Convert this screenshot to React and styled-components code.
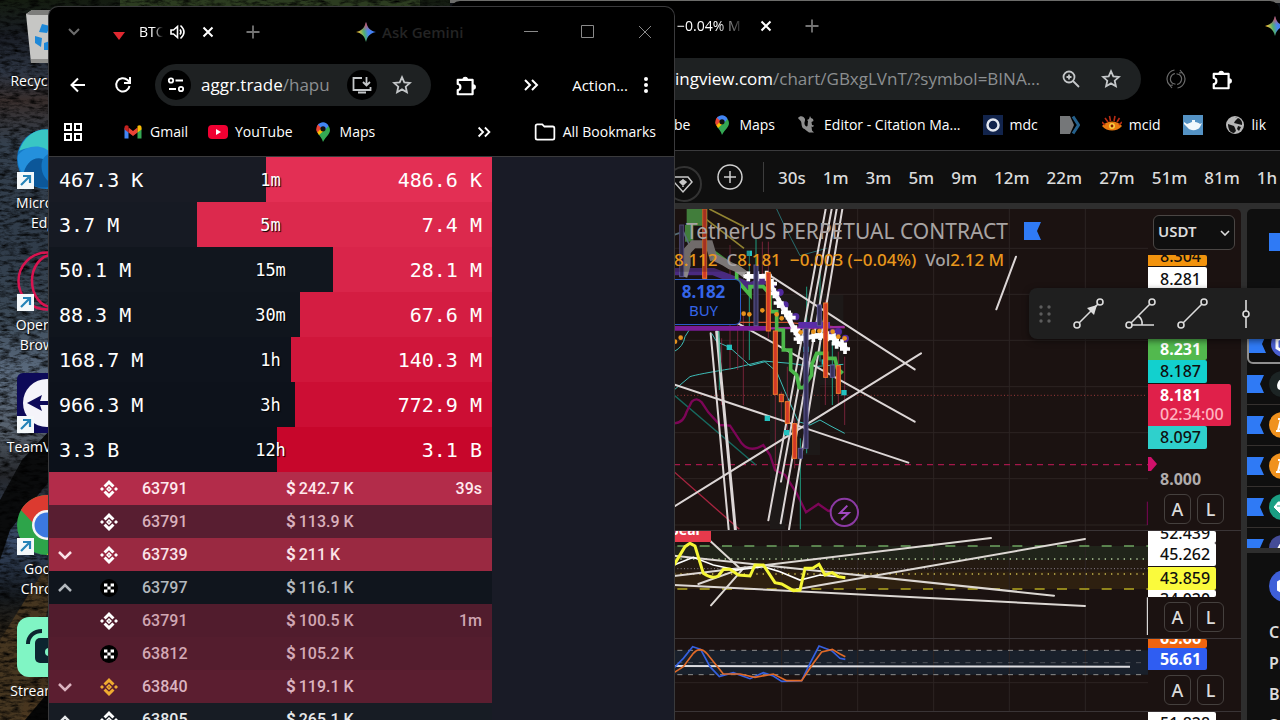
// App.jsx
import React from 'react';
import styled, { createGlobalStyle } from 'styled-components';

const GlobalStyle = createGlobalStyle`
  * {
    box-sizing: border-box;
  }

  body {
    margin: 0;
    background: #0c0f14;
    font-family: 'Open Sans', 'Noto Sans', sans-serif;
    color: #ffffff;
    overflow: hidden;
  }

  button,
  input,
  select {
    font: inherit;
    color: inherit;
    background: none;
    border: 0;
    padding: 0;
    margin: 0;
  }

  a {
    color: inherit;
    text-decoration: none;
  }
`;

/* ---------- Desktop ---------- */

const Desktop = styled.div`
  position: relative;
  height: 100vh;
  overflow: hidden;
`;

const Wallpaper = styled.svg`
  position: absolute;
  inset: 0;
  width: 100%;
  height: 100%;
`;

const DesktopIcons = styled.nav`
  position: relative;
  display: flex;
  flex-direction: column;
  width: 94px;
  padding-top: 7px;
`;

const Shortcut = styled.a`
  display: flex;
  flex-direction: column;
  align-items: center;
  gap: 4px;
  height: 122px;
  font-size: 14px;
  line-height: 20px;
  text-align: center;
  text-shadow: 1px 1px 2px #000000;
  white-space: nowrap;
`;

// Windows sit freely on the desktop and overlap each other
const Window = styled.section`
  position: absolute;
  display: flex;
  flex-direction: column;
  background: #000000;
  border-radius: 10px 10px 0 0;
  overflow: hidden;
`;

const ChartWindow = styled(Window)`
  top: 1px;
  left: 450px;
  right: 0;
  bottom: 0;
  padding-left: 224px;
`;

const AggrWindow = styled(Window)`
  top: 6px;
  left: 48px;
  bottom: 0;
  width: 627px;
  border: 1px solid #3a3a3c;
  border-bottom: 0;
`;

/* ---------- Browser chrome ---------- */

const TabStrip = styled.header`
  display: flex;
  flex: none;
  align-items: center;
  height: 50px;
  padding: ${({ $pad }) => $pad || '0'};
`;

const NavBar = styled.div`
  display: flex;
  flex: none;
  align-items: center;
  height: 56px;
  padding: ${({ $pad }) => $pad || '0'};
  gap: ${({ $gap }) => $gap || '0'};
`;

const BookmarkBar = styled.nav`
  display: flex;
  flex: none;
  align-items: center;
  gap: ${({ $gap }) => $gap || '20px'};
  height: 44px;
  padding: ${({ $pad }) => $pad || '0'};
  border-bottom: 1px solid #3a3a3c;
  white-space: nowrap;
`;

const Bookmark = styled.a`
  display: flex;
  flex: none;
  align-items: center;
  gap: 7px;
  font-size: 14px;
  line-height: 20px;
`;

const IconButton = styled.button`
  display: grid;
  flex: none;
  place-items: center;
  width: ${({ $size }) => $size || '20px'};
  height: ${({ $size }) => $size || '20px'};
  border-radius: 50%;
  background: ${({ $bg }) => $bg || 'none'};
  color: ${({ $color }) => $color || '#ffffff'};
`;

const TabTitle = styled.span`
  width: ${({ $width }) => $width};
  overflow: hidden;
  font-size: 14px;
  line-height: 20px;
  white-space: nowrap;
  mask-image: linear-gradient(90deg, #000 60%, transparent);
`;

const Spacer = styled.span`
  flex: ${({ $width }) => ($width ? `0 0 ${$width}` : '1')};
`;

const Gemini = styled.button`
  display: flex;
  flex: none;
  align-items: center;
  gap: 6px;
  font-size: 15px;
  font-weight: 600;
  color: #242424;
`;

// The last toolbar item runs under the window edge
const EdgeTools = styled.div`
  display: flex;
  margin-right: -5px;
`;

const WindowControls = styled.div`
  display: flex;
  gap: 37px;
`;

const Omnibox = styled.div`
  display: flex;
  flex: ${({ $grow }) => ($grow ? '1' : 'none')};
  align-items: center;
  height: 42px;
  width: ${({ $width }) => $width || 'auto'};
  padding: ${({ $pad }) => $pad};
  background: #1e2122;
  border-radius: ${({ $radius }) => $radius || '21px'};
`;

const Url = styled.a`
  flex: 1;
  min-width: 0;
  overflow: hidden;
  font-size: 17px;
  line-height: 24px;
  white-space: nowrap;

  span {
    color: #8c8f91;
  }
`;

const ActionLink = styled.button`
  font-size: 15px;
`;

/* ---------- Aggr page ---------- */

const AggrPage = styled.main`
  flex: 1;
  background: #191b26;
`;

const Pane = styled.div`
  width: 443px;
`;

const Stats = styled.div`
  background: #181b24;
  font-family: 'DejaVu Sans Mono', 'Liberation Mono', monospace;
`;

const StatRow = styled.div`
  display: grid;
  grid-template-columns: 1fr 60px 1fr;
  align-items: center;
  height: 45px;
  padding: 0 10px;
  font-size: 20px;
  background: linear-gradient(270deg, ${({ $sell }) => $sell} var(--share), ${({ $buy }) => $buy} var(--share));

  span {
    font-size: 17px;
    text-align: center;
    text-shadow: 1px 1px 1px #000000;
  }

  b {
    font-weight: 400;
    text-align: right;
  }
`;

const TradeRow = styled.div`
  display: grid;
  grid-template-columns: 32px 55px 144px 1fr auto;
  align-items: center;
  height: 33px;
  padding: 0 10px 0 6px;
  background: ${({ $bg }) => $bg};
  color: ${({ $color }) => $color};
  font-family: Roboto, sans-serif;
  font-size: 16px;
  font-weight: 500;
  line-height: 20px;

  b {
    margin-right: 3px;
    font-size: 17px;
  }
`;

const TradeIcon = styled.span`
  display: grid;
  width: 20px;
  height: 20px;
  justify-self: start;
  margin-left: 12px;
`;

const ExpandButton = styled.button`
  display: grid;
  width: 20px;
  height: 20px;
  place-items: center;
`;

/* ---------- Trading page ---------- */

const IntervalBar = styled.div`
  display: flex;
  flex: none;
  align-items: center;
  gap: 17px;
  height: 52px;
  background: #0f0f0f;
  color: #dbdbdb;
  font-family: 'Noto Sans', 'Open Sans', sans-serif;
  overflow: hidden;
`;

const Interval = styled.button`
  flex: none;
  font-size: 17px;
  font-weight: 500;
`;

const Divider = styled.span`
  flex: none;
  width: 1px;
  height: 30px;
  margin-left: 3px;
  margin-right: -3px;
  background: #3d3d3d;
`;

const LayoutArea = styled.main`
  display: flex;
  flex: 1;
  gap: 6px;
  min-height: 0;
  padding-top: 6px;
  background: #2e2e2e;
  font-family: 'Noto Sans', 'Open Sans', sans-serif;
`;

const ChartArea = styled.section`
  position: relative;
  display: flex;
  flex: 1;
  flex-direction: column;
  gap: 1px;
  min-width: 0;
  background: #3a3436;
  border-radius: 0 5px 0 0;
  overflow: hidden;
`;

const ChartPane = styled.div`
  display: flex;
  flex: none;
  height: ${({ $height }) => $height};
  background: #1b1211;
  overflow: hidden;
`;

const Plot = styled.svg`
  flex: 1;
  min-width: 0;
  height: 100%;
`;

const Scale = styled.div`
  display: flex;
  flex: none;
  flex-direction: column;
  align-items: flex-start;
  width: 93px;
  height: 100%;
`;

const PriceTag = styled.span`
  flex: none;
  width: ${({ $width }) => $width || '59px'};
  height: ${({ $height }) => $height || '22px'};
  margin-bottom: ${({ $after }) => $after || '0'};
  padding-left: 12px;
  display: flex;
  flex-direction: column;
  justify-content: ${({ $clip }) => ($clip === 'top' ? 'flex-end' : $clip === 'bottom' ? 'flex-start' : 'center')};
  background: ${({ $bg }) => $bg || 'none'};
  color: ${({ $color }) => $color || '#0f0f0f'};
  border-radius: 0 2px 2px 0;
  font-size: 16px;
  font-weight: ${({ $bold }) => ($bold ? 700 : 500)};
  line-height: 19px;
  overflow: hidden;

  small {
    font-size: 16px;
    font-weight: 500;
    color: #ffb3c0;
  }
`;

const CurrencySelect = styled.select`
  width: 82px;
  height: 35px;
  margin: 6px 0 5px 5px;
  padding: 0 0 3px 4px;
  appearance: none;
  border: 1px solid #4a4644;
  border-radius: 6px;
  background: #0f0f0f
    url("data:image/svg+xml,%3Csvg xmlns='http://www.w3.org/2000/svg' width='10' height='6'%3E%3Cpath d='M1 1l4 4 4-4' fill='none' stroke='%23dbdbdb' stroke-width='1.6'/%3E%3C/svg%3E")
    no-repeat right 4px center;
  color: #dbdbdb;
  font-size: 15px;
  font-weight: 600;
`;

const ScaleButtons = styled.div`
  display: flex;
  gap: 6px;
  margin-top: auto;
  padding: 0 0 6px 16px;

  button {
    width: 27px;
    height: 30px;
    border: 1px solid #45403e;
    border-radius: 6px;
    color: #dbdbdb;
    font-size: 18px;
    font-weight: 500;
    line-height: 26px;
  }
`;

// Symbol name and quote printed over the plot
const Legend = styled.div`
  position: absolute;
  top: 7px;
  left: 0;
  color: #a8a4a4;
  white-space: nowrap;
`;

const LegendTitle = styled.h1`
  display: flex;
  align-items: center;
  gap: 16px;
  margin: 0;
  padding-left: 12px;
  font-size: 21px;
  font-weight: 400;
  line-height: 30px;
`;

const LegendQuote = styled.div`
  display: flex;
  gap: 9px;
  color: #e8971c;
  font-size: 17px;
  font-weight: 500;
  line-height: 28px;

  i {
    color: #a8a4a4;
    font-style: normal;
  }
`;

const BuyButton = styled.button`
  position: absolute;
  top: 70px;
  left: -10px;
  width: 77px;
  height: 46px;
  padding: 0 0 3px 2px;
  display: flex;
  flex-direction: column;
  justify-content: center;
  align-items: center;
  border: 1px solid #2b5ac8;
  border-radius: 6px;
  background: #0c0d13;
  color: #3565e8;
  font-size: 15px;
  line-height: 19px;

  b {
    font-size: 17px;
  }
`;

const DrawingBar = styled.div`
  position: absolute;
  top: 288px;
  right: 0;
  display: flex;
  align-items: center;
  gap: 20px;
  width: 251px;
  height: 51px;
  padding-left: 8px;
  background: #1f1f1f;
  border-radius: 8px 0 0 8px;
  box-shadow: 0 2px 6px rgba(0, 0, 0, 0.5);
  overflow: hidden;
`;

const ToolButton = styled.button`
  display: grid;
  flex: none;
  width: 32px;
  height: 32px;
`;

const SidePanels = styled.aside`
  display: flex;
  flex: none;
  flex-direction: column;
  gap: 5px;
  width: 33px;
  overflow: hidden;
`;

const Watchlist = styled.div`
  flex: none;
  height: 339px;
  background: #0f0f0f;
  border-radius: 5px 0 0 0;
  overflow: hidden;

  svg {
    flex: none;
  }
`;

const WatchlistHead = styled.div`
  display: flex;
  height: 114px;
  padding: 24px 0 0 22px;
`;

const WatchRow = styled.div`
  display: flex;
  align-items: center;
  gap: 5px;
  width: 80px;
  height: 41px;
  border-bottom: 1px solid #35312f;
  ${({ $active }) => $active && 'border: 2px solid #8f8f8f; border-radius: 6px;'}
`;

const Details = styled.div`
  flex: 1;
  padding: 17px 0 0 22px;
  background: #0f0f0f;
  color: #dbdbdb;
  font-size: 16px;
  font-weight: 600;
  line-height: 31px;
  overflow: hidden;

  p {
    margin: 0;
    white-space: nowrap;
  }

  svg {
    display: block;
    margin-bottom: 15px;
  }
`;

/* ---------- Icons ---------- */

const Stroke = ({ size = 20, width = 2, children }) => (
  <svg width={size} height={size} viewBox="0 0 20 20" fill="none" stroke="currentColor" strokeWidth={width}>
    {children}
  </svg>
);

const CloseIcon = () => <Stroke><path d="M5.5 5.5l9 9m0-9l-9 9" /></Stroke>;
const PlusIcon = () => <Stroke width={1.8}><path d="M10 3.5v13M3.5 10h13" /></Stroke>;
const ChevronsIcon = () => <Stroke><path d="M4 5l5 5-5 5M11 5l5 5-5 5" /></Stroke>;
const StarIcon = () => (
  <Stroke width={1.8}>
    <path d="M10 2.200l2.300 5.200 5.600.5-4.200 3.800 1.200 5.600L10 14.400l-4.900 2.900 1.200-5.600L2.100 7.900l5.600-.5z" />
  </Stroke>
);
const PuzzleIcon = () => (
  <Stroke size={22} width={2}>
    <path d="M2.500 4.500H16v13H2.500v-3.700c3.200-.3 3.200-5.300 0-5.600z" strokeLinejoin="round" />
    <path d="M7.300 4a2 2 0 0 1 4 0zM16.500 9a2 2 0 0 1 0 4z" fill="currentColor" strokeWidth="1" />
  </Stroke>
);

const SparkIcon = () => (
  <svg width="20" height="20" viewBox="0 0 20 20">
    <defs>
      <linearGradient id="sparkH" x1="0" x2="1" y1="0.6" y2="0.4">
        <stop offset="0.1" stopColor="#f7c33a" />
        <stop offset="0.4" stopColor="#4fae72" />
        <stop offset="0.6" stopColor="#4a86f0" />
        <stop offset="1" stopColor="#3b78f0" />
      </linearGradient>
      <linearGradient id="sparkV" x1="0" x2="0" y1="0" y2="1">
        <stop offset="0" stopColor="#f0483e" />
        <stop offset="0.45" stopColor="#f0483e" stopOpacity="0" />
      </linearGradient>
    </defs>
    <path d="M10 0c1.500 6 4 8.500 10 10-6 1.500-8.500 4-10 10-1.500-6-4-8.500-10-10 6-1.500 8.500-4 10-10z" fill="url(#sparkH)" />
    <path d="M10 0c1.500 6 4 8.500 10 10-6 1.500-8.500 4-10 10-1.500-6-4-8.500-10-10 6-1.500 8.500-4 10-10z" fill="url(#sparkV)" />
  </svg>
);

const MapsIcon = () => (
  <svg width="20" height="20" viewBox="0 0 20 20">
    <path d="M10 20c-1-4-3-5.500-4.800-8.300L13 3l2.500 1c2.500 3.500 1.500 6.500-.5 9-2 2.500-3.500 4-5 7z" fill="#34a853" />
    <path d="M4 10c-1.500-4 .2-7 2-8.500l3 4z" fill="#ea4335" />
    <path d="M5 11.500C3.900 10 3.700 9 3.800 7L8 5l3 3.500-5 4.600z" fill="#fbbc04" />
    <path d="M4.800 2.900C8-1 13.500-.5 15.600 4L11 9 8 6z" fill="#4285f4" />
    <path d="M4 5l.8-2.100L8.500 6 4.400 10.500C3.400 8.500 3.600 6.500 4 5z" fill="#ea4335" />
    <circle cx="10" cy="6.800" r="2.600" fill="#101010" />
  </svg>
);

const GmailIcon = () => (
  <svg width="20" height="20" viewBox="0 0 20 20">
    <path d="M1.500 6v10.500h4V9.500z" fill="#4285f4" />
    <path d="M18.500 6v10.500h-4V9.500z" fill="#34a853" />
    <path d="M5.500 5.500v5L10 14l4.500-3.500v-5L10 9z" fill="#ea4335" />
    <path d="M1.500 7.500v-2C1.500 3.300 3.800 2.700 5.500 4v6.500z" fill="#c5221f" />
    <path d="M18.500 7.500v-2c0-2.200-2.300-2.800-4-1.500v6.500z" fill="#fbbc04" />
  </svg>
);

const YouTubeIcon = () => (
  <svg width="20" height="20" viewBox="0 0 20 20">
    <rect y="3" width="20" height="14" rx="4" fill="#f00032" />
    <path d="M8 7l5 3-5 3z" fill="#fff" />
  </svg>
);

const Flag = () => (
  <svg width="17" height="18" viewBox="0 0 17 18">
    <path d="M0 0h17l-4 9 4 9H0z" fill="#2f7af5" />
  </svg>
);

const BinanceIcon = ({ color }) => (
  <svg width="20" height="20" viewBox="0 0 20 20" fill={color}>
    <path d="M10 1l5.500 5.500-2.100 2.100L10 5.200 6.600 8.600 4.500 6.500zM10 19l5.500-5.500-2.100-2.100L10 14.800l-3.400-3.400-2.100 2.100zM3 8l2 2-2 2-2-2zM17 8l2 2-2 2-2-2z" />
    <path d="M10 7l3 3-3 3-3-3zm0 2.200l-.8.8.8.8.8-.8z" fillRule="evenodd" />
  </svg>
);

const OkxIcon = () => (
  <svg width="20" height="20" viewBox="0 0 20 20">
    <circle cx="10" cy="10" r="9" fill="#000" />
    <path d="M5 5.500h3.400v3H5zM11.600 5.500H15v3h-3.400zM8.400 8.500h3.200v3H8.400zM5 11.500h3.400v3H5zM11.600 11.500H15v3h-3.400z" fill="#fff" />
  </svg>
);

const coinArt = {
  link: { color: '#4a5fd0', path: <path d="M13 5l7 4v8l-7 4-7-4V9z" fill="none" stroke="#fff" strokeWidth="3" /> },
  drop: { color: '#1c2424', path: <path d="M14 6c-6 4-7 9-5 12 3 2 8 2 10-1z" fill="#fff" /> },
  btc: { color: '#f0921e', path: <path d="M9 19l3-12h3c4 0 3 5-1 5.500 4 0 3 6.500-2 6.500zM7 19h3M9 7h4" fill="none" stroke="#fff" strokeWidth="2.200" /> },
  tether: { color: '#1a9e82', path: <path d="M4 13l5-6h9l5 6-10 9zM8 12h9M13 9v8" fill="#fff" stroke="#1a9e82" /> },
  tri: { color: '#444c98', path: <path d="M13 5l8 14H5z" fill="#fff" /> },
};

const Coin = ({ kind }) => (
  <svg width="26" height="26" viewBox="0 0 26 26">
    <circle cx="13" cy="13" r="13" fill={coinArt[kind].color} />
    {coinArt[kind].path}
  </svg>
);

const ShortcutArrow = () => (
  <g transform="translate(0 43)">
    <rect width="17" height="17" fill="#f4f8fa" />
    <path d="M4 13l8.500-8.500M6 4h7v7" fill="none" stroke="#2583b8" strokeWidth="2.200" />
  </g>
);

const AppArt = ({ name }) => (
  <svg width="60" height="60" viewBox="0 0 60 60">
    {name === 'bin' && (
      <g>
        <path d="M9 7l6-4h32l5 4-5 49H14z" fill="#c6c6c4" />
        <path d="M9 7l6-4h32l5 4-2 1H13z" fill="#7d7d7b" />
        <path d="M14 52h34l-1 4H14z" fill="#8f8f8d" />
        <path d="M25 17l8 2-3 7-8-1zM18 29l7 2-1 9-6-4zM27 36l6-2v9h-6z" fill="#1e88d8" />
      </g>
    )}
    {name === 'edge' && (
      <g>
        <circle cx="30" cy="30" r="30" fill="#1477c4" />
        <path d="M2 22C8 4 24-4 40 3c14 6 20 17 20 28H34c0-10-20-16-32-9z" fill="#39c6c4" />
        <path d="M1 26c8-10 24-12 33-2-10 2-14 18-6 28C12 54-1 44 1 26z" fill="#2490dc" />
        <path d="M26 30c-4 9 0 22 12 26-14 6-26 1-32-9 2-12 10-20 20-17z" fill="#0c5799" />
      </g>
    )}
    {name === 'opera' && (
      <g fill="none" stroke="#d81450" strokeWidth="2.500">
        <circle cx="30" cy="30" r="28.500" />
        <ellipse cx="35" cy="30" rx="20" ry="26" />
      </g>
    )}
    {name === 'team' && (
      <g>
        <rect width="60" height="60" rx="6" fill="#0d0a58" />
        <circle cx="30" cy="30" r="24" fill="#f4f4fa" />
        <path d="M10 30l15-8-2 6h14l-2-6 15 8-15 8 2-6H23l2 6z" fill="#0d0a58" />
      </g>
    )}
    {name === 'chrome' && (
      <g>
        <circle cx="30" cy="30" r="30" fill="#2da44a" />
        <path d="M4 15C17-6 46-4 56 16H30c-8 0-13 5-14 12z" fill="#dc3a30" />
        <path d="M56 16c9 18-2 42-26 44l13-23c5-9 2-16-3-21z" fill="#fbc116" />
        <circle cx="30" cy="30" r="15" fill="#f5f5f5" />
        <circle cx="30" cy="30" r="12.500" fill="#3b78e0" />
      </g>
    )}
    {name === 'stream' && (
      <g>
        <rect width="60" height="60" rx="12" fill="#80f5c4" />
        <rect x="18" y="21" width="32" height="25" rx="5" fill="#0c2530" />
        <circle cx="32" cy="35" r="4" fill="#80f5c4" />
        <path d="M11 27c0-8 6-13 14-13" fill="none" stroke="#0c2530" strokeWidth="4" />
      </g>
    )}
    {['edge', 'opera', 'team', 'chrome'].includes(name) && <ShortcutArrow />}
  </svg>
);

/* ---------- Data ---------- */

const shortcuts = [
  { art: 'bin', label: ['Recycle Bin'] },
  { art: 'edge', label: ['Microsoft', 'Edge'] },
  { art: 'opera', label: ['Opera GX', 'Browser'] },
  { art: 'team', label: ['TeamViewer'] },
  { art: 'chrome', label: ['Google', 'Chrome'] },
  { art: 'stream', label: ['Streamlabs'] },
];

const stats = [
  { span: '1m', buy: '467.3 K', sell: '486.6 K', share: 51, left: '#181b24', right: '#e32f54' },
  { span: '5m', buy: '3.7 M', sell: '7.4 M', share: 66.7, left: '#161a23', right: '#dc294d' },
  { span: '15m', buy: '50.1 M', sell: '28.1 M', share: 35.9, left: '#11161e', right: '#d9254a' },
  { span: '30m', buy: '88.3 M', sell: '67.6 M', share: 43.4, left: '#10151d', right: '#d41d42' },
  { span: '1h', buy: '168.7 M', sell: '140.3 M', share: 45.4, left: '#0e131c', right: '#d0163b' },
  { span: '3h', buy: '966.3 M', sell: '772.9 M', share: 44.5, left: '#0d121b', right: '#cc0e34' },
  { span: '12h', buy: '3.3 B', sell: '3.1 B', share: 48.5, left: '#0c111a', right: '#c7062b' },
];

const trades = [
  { icon: 'binance', price: '63791', amount: '242.7 K', time: '39s', bg: '#b32c4a', color: '#ffe9ee' },
  { icon: 'binance', price: '63791', amount: '113.9 K', bg: '#581e31', color: '#d9b0bc' },
  { icon: 'binance', price: '63739', amount: '211 K', bg: '#9a2941', color: '#fbe3e8', arrow: 'down' },
  { icon: 'okx', price: '63797', amount: '116.1 K', bg: '#10151d', color: '#b4b9be', arrow: 'up' },
  { icon: 'binance', price: '63791', amount: '100.5 K', time: '1m', bg: '#511c2d', color: '#d0a6b2' },
  { icon: 'okx', price: '63812', amount: '105.2 K', bg: '#541d2e', color: '#d3a9b5' },
  { icon: 'gold', price: '63840', amount: '119.1 K', bg: '#5b1e30', color: '#dcb4c0', arrow: 'down' },
  { icon: 'binance', price: '63805', amount: '265.1 K', bg: '#171c24', color: '#e6e8ea', arrow: 'up' },
];

const intervals = ['30s', '1m', '3m', '5m', '9m', '12m', '22m', '27m', '51m', '81m', '1h'];

const watchlist = ['link', 'drop', 'btc', 'btc', 'tether', 'tri'];

/* ---------- Plots, three units to the pixel ---------- */

const GRID_X = [335, 563, 791, 1018, 1246];

const Grid = ({ top, bottom, rows, columns = GRID_X }) => (
  <g stroke="#2c2423" strokeWidth="3">
    {columns.map((x) => <path key={x} d={`M${x} ${top}V${bottom}`} />)}
    {rows.map((y) => <path key={y} d={`M0 ${y}H1434`} />)}
  </g>
);

const orangeCandles = [
  [104, 12, 220], [295, 202, 378], [316, 378, 568], [334, 568, 590],
  [352, 590, 655], [374, 656, 760], [467, 294, 517], [505, 482, 565],
];
const blueCandles = [[258, 180, 362], [448, 300, 362], [408, 370, 730], [391, 730, 760], [487, 480, 517], [35, 60, 215]];
const redWicks = [
  [180, 120, 495], [203, 180, 495], [220, 330, 600], [277, 110, 250], [295, 110, 400], [316, 568, 800],
  [334, 560, 650], [352, 485, 700], [374, 640, 790], [466, 284, 600], [505, 440, 600], [524, 455, 660], [155, 400, 600],
];
const tealWicks = [[148, 400, 555], [238, 140, 465], [258, 100, 370], [391, 700, 973], [410, 245, 745], [450, 190, 470], [487, 390, 600]];
const indigoDots = [[330, 262], [345, 300], [377, 335], [488, 382], [505, 380], [526, 400]];
const orangeDots = [
  [15, 410], [32, 398], [221, 326], [238, 328], [277, 316], [320, 328], [335, 340],
  [392, 382], [430, 380], [448, 378], [488, 380], [505, 395], [524, 400],
];
const cyanDots = [[178, 427], [238, 145], [292, 640], [350, 683], [408, 433], [463, 471], [522, 563]];
const crosses = [
  [235, 214], [262, 214], [290, 212], [306, 236], [313, 265], [326, 294], [348, 322], [362, 338],
  [376, 376], [386, 402], [406, 398], [430, 396], [450, 390], [472, 394], [492, 400], [500, 416], [516, 418], [525, 432],
];

const PricePlot = () => (
  <Plot viewBox="12 12 1422 963" preserveAspectRatio="xMinYMin slice" fill="none" role="img" aria-label="Price chart">
    <Grid top={0} bottom={980} rows={[130, 268, 406, 545, 683, 821, 960]} columns={[563, 791, 1018, 1246]} />
    <path d="M300 270H520V540H450V750H345V973H300z" fill="#1d1918" />
    <path d="M12 571H1425" stroke="#a03a3c" strokeWidth="3" strokeDasharray="3 7" />
    <path d="M12 779H1434" stroke="#a3174a" strokeWidth="4" strokeDasharray="18 15" />
    <path d="M1432 890V960" stroke="#7c0557" strokeWidth="3" />
    <path d="M118 12L222 65M105 40L222 130" stroke="#b8a83c" strokeWidth="5" />
    <path d="M12 800L208 973" stroke="#a82440" strokeWidth="4" />
    <path d="M12 570L258 780" stroke="#176a60" strokeWidth="4" />
    <g stroke="#3dbdb8" strokeWidth="3">
      <path d="M12 555L60 515Q80 508 190 490L280 468L360 475L430 485L520 478" />
      <path d="M125 385L140 410L180 428L240 482L285 470L320 500L345 560L385 650L420 660L450 645L480 662L524 685" />
      <path d="M12 440Q40 425 45 395L62 368" />
      <path d="M320 12L340 55L390 152L470 130" stroke="#286e70" />
    </g>
    <path
      d="M12 655Q40 655 50 620L65 590Q80 575 95 592L115 622L150 660L180 662L215 715Q240 745 280 720L300 750L315 795L345 810L380 865L408 922L445 897L475 918L488 915"
      stroke="#7c0557" strokeWidth="7"
    />
    <g stroke="#a02a4c" strokeWidth="2">
      {redWicks.map(([x, a, b]) => <path key={x} d={`M${x} ${a}V${b}`} />)}
    </g>
    <g stroke="#1f9c80" strokeWidth="3">
      {tealWicks.map(([x, a, b]) => <path key={x} d={`M${x} ${a}V${b}`} />)}
    </g>
    <g stroke="#dcd6d6" strokeWidth="6" strokeLinecap="round">
      <path d="M290 205L734 493M12 905L753 445M150 325L734 650M12 538L715 773M1038 155L979 313" />
      <path d="M467 12L295 946M485 12L333 830M500 12L332 955M517 12L357 973" />
      <path d="M122 385L176 973" />
      <path d="M140 380L196 973" strokeWidth="9" />
      <path d="M146 380L152 500" stroke="#5cb8a0" strokeWidth="5" />
    </g>
    <path d="M12 370H300" stroke="#7a1c96" strokeWidth="14" />
    <path d="M200 352H350L524 368" stroke="#c8502e" strokeWidth="4" />
    <path d="M300 370L524 366" stroke="#9c2ca0" strokeWidth="7" />
    <path d="M12 200H130L240 243L290 225L310 250" stroke="#4a2a80" strokeWidth="22" />
    <path d="M385 360H480" stroke="#5a2ca8" strokeWidth="18" />
    {indigoDots.map(([x, y]) => <circle key={`${x}-${y}`} cx={x} cy={y} r="11" fill="#50299c" />)}
    <path d="M50 12H112V62H70V110H45V60H50z" fill="#4ea04a" />
    <path d="M12 90L40 80L58 120" stroke="#6a8a9a" strokeWidth="5" />
    <path d="M105 62V130L130 140L200 190V225L240 270V245H280L300 268V320H320V375H340V435H362V495L380 510L388 548H400L425 510V480L440 445H470V460H495L502 490L518 505" stroke="#4cb84a" strokeWidth="11" />
    <path d="M40 215L50 180V140L70 118H118L132 165" stroke="#8c8888" strokeWidth="24" />
    <path d="M130 155L160 170L180 182L200 190L225 208" stroke="#9c9898" strokeWidth="22" />
    <path d="M225 214H292L302 240L345 320L388 402L440 392L485 395L505 415L530 432" stroke="#f6f2fa" strokeWidth="14" />
    {crosses.map(([x, y]) => <path key={`${x}-${y}`} d={`M${x - 15} ${y}h30M${x} ${y - 15}v30`} stroke="#fff" strokeWidth="11" />)}
    <g fill="#24c2c0">
      {cyanDots.map(([x, y]) => <rect key={x} x={x - 8} y={y - 8} width="16" height="16" />)}
    </g>
    <g fill="#35305a" stroke="#5c5690" strokeWidth="3">
      {blueCandles.map(([x, a, b]) => <rect key={x} x={x - 6} y={a} width="12" height={b - a} />)}
    </g>
    <g fill="#d23a28" stroke="#f07a2c" strokeWidth="3">
      {orangeCandles.map(([x, a, b]) => <rect key={x} x={x - 6} y={a} width="12" height={b - a} />)}
    </g>
    {orangeDots.map(([x, y]) => <circle key={`${x}-${y}`} cx={x} cy={y} r="7" fill="#e8921c" />)}
    <path d="M12 12H240V200H12z" fill="#1b1211" fillOpacity="0.25" />
    <circle cx="523" cy="922" r="41" fill="#1b1211" stroke="#8c3aa4" strokeWidth="6" />
    <path d="M532 902L510 924H536L514 944" stroke="#a048c0" strokeWidth="6" />
  </Plot>
);

const MomentumPlot = () => (
  <Plot viewBox="12 33 1422 321" preserveAspectRatio="xMinYMin slice" fill="none" role="img" aria-label="Momentum">
    <path d="M12 78H1434V120H12z" fill="#20241a" />
    <path d="M12 120H1434V207H12z" fill="#241a12" />
    <path d="M12 155H1434V207H12z" fill="#2e2010" />
    <Grid top={30} bottom={360} rows={[]} />
    <path d="M22 78H1434" stroke="#6fa562" strokeWidth="5" strokeDasharray="30 37" />
    <path d="M12 117H1434" stroke="#b4cc9c" strokeWidth="4" strokeDasharray="4 15" />
    <path d="M12 146H1434" stroke="#8a8090" strokeWidth="3" strokeDasharray="3 7" />
    <path d="M12 162H1434" stroke="#c8b84c" strokeWidth="4" strokeDasharray="4 15" />
    <path d="M22 207H1434" stroke="#b4a820" strokeWidth="5" strokeDasharray="30 37" />
    <path d="M1432 232V345" stroke="#ffffff" strokeWidth="3" />
    <g stroke="#ddd8d4" strokeWidth="6" strokeLinecap="round">
      <path d="M12 107L1152 227M12 195L1245 258M12 168L963 54M380 208L1245 57" />
      <path d="M85 192L225 142M123 256L220 145M120 62L215 150" />
    </g>
    <path d="M12 135L70 112L130 135L200 150L280 140L330 155L390 180L450 165L524 172" stroke="#ffffff" strokeWidth="5" />
    <path d="M12 135L45 80L60 70L75 78L100 160Q125 178 145 168L160 148H180L205 165L240 168L255 135H280L315 188L335 192L370 212L390 210L405 145H428L447 133L465 165L487 158L505 170L526 173" stroke="#f5f535" strokeWidth="9" />
    <path d="M12 33H123V66H12z" fill="#e63a4c" />
    <text x="0" y="46" fill="#fff" fontSize="42" fontWeight="700">bear</text>
  </Plot>
);

const StochPlot = () => (
  <Plot viewBox="12 357 1422 216" preserveAspectRatio="xMinYMin slice" fill="none" role="img" aria-label="Stochastic">
    <path d="M12 391H1434V464H12z" fill="#19202b" />
    <Grid top={350} bottom={580} rows={[488]} />
    <path d="M22 391H1420M22 464H1420" stroke="#8c8c8c" strokeWidth="3" strokeDasharray="15 17" />
    <path d="M22 428H1420" stroke="#4c5058" strokeWidth="3" strokeDasharray="15 17" />
    <path d="M12 438L1380 440" stroke="#dcdce0" strokeWidth="6" />
    <path d="M12 444L40 415L68 380L92 388L120 440L148 470L190 458L240 476L280 458L310 468L335 484L395 482L420 430L447 378L485 392L510 415L526 418" stroke="#3560e0" strokeWidth="5" />
    <path d="M12 458L40 440L70 400Q90 378 110 400L160 462L210 462L255 472L310 462L350 482H395L430 430L455 396L487 388L510 402L526 410" stroke="#e06a28" strokeWidth="5" />
  </Plot>
);

/* ---------- Windows ---------- */

function AutoLog() {
  return (
    <ScaleButtons>
      <button type="button" aria-label="Auto scale">A</button>
      <button type="button" aria-label="Log scale">L</button>
    </ScaleButtons>
  );
}

function ChartBrowser() {
  return (
    <ChartWindow>
      <TabStrip $pad="0 0 0 3px">
        <TabTitle $width="68px">−0.04% M</TabTitle>
        <Spacer $width="11px" />
        <IconButton aria-label="Close tab"><CloseIcon /></IconButton>
        <Spacer $width="26px" />
        <IconButton aria-label="New tab" $color="#747474"><PlusIcon /></IconButton>
        <Spacer />
        <EdgeTools>
          <IconButton aria-label="Gemini"><SparkIcon /></IconButton>
        </EdgeTools>
      </TabStrip>
      <NavBar $pad="0 49px 0 0" $gap="25px">
        <Omnibox $grow $radius="0 21px 21px 0" $pad="0 20px 0 1px">
          <Url href="#chart">ingview.com<span>/chart/GBxgLVnT/?symbol=BINA...</span></Url>
          <IconButton aria-label="Zoom" $color="#c4c7c9">
            <Stroke width={1.8}><circle cx="8" cy="8" r="5.500" /><path d="M12 12l6 6M8 5.500v5M5.500 8h5" /></Stroke>
          </IconButton>
          <Spacer $width="20px" />
          <IconButton aria-label="Bookmark this page" $color="#c4c7c9"><StarIcon /></IconButton>
        </Omnibox>
        <IconButton aria-label="Sync extension" $color="#6a6a6a">
          <Stroke width={1.2}>
            <path d="M8.500 1A9 9 0 0 0 4 16.500M6 19l-2-2.500 3-.5M11.500 19A9 9 0 0 0 16 3.500M14 1l2 2.500-3 .5" />
            <path d="M9 4.500a5.500 5.500 0 0 0-2.500 9.700l3 1M11 15.500a5.500 5.500 0 0 0 2.500-9.700l-3-1" />
          </Stroke>
        </IconButton>
        <IconButton aria-label="Extensions"><PuzzleIcon /></IconButton>
      </NavBar>
      <BookmarkBar $gap="22px" $pad="0 0 8px">
        <Bookmark href="#youtube">be</Bookmark>
        <Bookmark href="#maps"><MapsIcon />Maps</Bookmark>
        <Bookmark href="#editor">
          <svg width="20" height="20" viewBox="0 0 20 20" fill="#8e8e8e">
            <path d="M1 3c2-3 6-2 7 1 .5 2-1 3-.5 5s2 3 3 2l.5-5-1-1 2-1 1-3 1 2 2 1 .5 2-2 1 .5 3 2 .5-1 1.500-1.500-.5.500 4 2 2h-5c-1-1-3-2-4.500-3.500C4 13 5 9 4 6.500 3 5 2 4.500 1 3z" />
          </svg>
          Editor - Citation Ma...
        </Bookmark>
        <Bookmark href="#mdc">
          <svg width="20" height="20" viewBox="0 0 20 20">
            <rect width="20" height="20" fill="#12244c" />
            <circle cx="10" cy="10" r="5.500" fill="none" stroke="#e4e8f0" strokeWidth="2.500" />
          </svg>
          mdc
        </Bookmark>
        <Bookmark href="#next" aria-label="Next">
          <svg width="20" height="20" viewBox="0 0 20 20">
            <path d="M0 1h10l4 9-4 9H0z" fill="#757779" />
            <path d="M13 1.500l5.500 8.500-5.500 8.500" fill="none" stroke="#24608c" strokeWidth="3" />
          </svg>
        </Bookmark>
        <Bookmark href="#mcid">
          <svg width="20" height="20" viewBox="0 0 20 20">
            <path d="M0 11c5-6 15-6 20 0-5 6-15 6-20 0z" fill="#e87a10" />
            <path d="M0 7l3 3M3 3l3 4M7.500 1l1 5M13 1l-1 5M17.500 3L15 7M20 7l-3 3" stroke="#b82c14" strokeWidth="1.600" />
            <circle cx="10" cy="11" r="3" fill="#f8d040" />
            <circle cx="10" cy="11" r="1.400" fill="#801808" />
          </svg>
          mcid
        </Bookmark>
        <Bookmark href="#docker" aria-label="Docker">
          <svg width="20" height="20" viewBox="0 0 20 20">
            <rect width="20" height="20" fill="#5492c4" />
            <path d="M1 7l3 2c3-1 4-2 5-2V5h3v2c2 0 4 1 5 2l2-1-2 4c-2 4-10 4-12 1L1 9z" fill="#f2f8fc" />
          </svg>
        </Bookmark>
        <Bookmark href="#lik">
          <svg width="20" height="20" viewBox="0 0 20 20">
            <circle cx="10" cy="10" r="9" fill="#b8b8b8" />
            <path d="M3 9l6 2 1 2 1 3-2 2c-4 0-6-4-6-9zM8 3l5 0-3 3-1 2 4 1 4 1c1-4-3-8-7-7zM13 11l3 1-2 4-2-2z" fill="#141414" />
          </svg>
          lik
        </Bookmark>
      </BookmarkBar>

      <IntervalBar>
        <IconButton $size="26px" aria-label="Drawing cursor" $color="#c8c8c8">
          <svg width="28" height="40" viewBox="0 0 28 40" fill="none" stroke="currentColor" strokeWidth="1.500">
            <circle cx="10" cy="20" r="17" stroke="#333" strokeWidth="2" />
            <path d="M0 13h14l4 5-9 10-9-10" />
            <path d="M9 15v8M6 18l3-2 3 2-3 3z" fill="currentColor" />
          </svg>
        </IconButton>
        <IconButton $size="26px" aria-label="Compare" $color="#d0d0d0">
          <svg width="26" height="26" viewBox="0 0 26 26" fill="none" stroke="currentColor" strokeWidth="1.500">
            <circle cx="13" cy="13" r="12" />
            <path d="M13 7v12M7 13h12" />
          </svg>
        </IconButton>
        <Divider />
        {intervals.map((label) => <Interval key={label}>{label}</Interval>)}
      </IntervalBar>

      <LayoutArea>
        <ChartArea>
          <ChartPane $height="321px">
            <PricePlot />
            <Scale>
              <CurrencySelect aria-label="Currency" defaultValue="USDT">
                <option>USDT</option>
              </CurrencySelect>
              <PriceTag $bg="#f2930e" $height="11px" $clip="top" $after="1px">8.304</PriceTag>
              <PriceTag $bg="#ffffff" $height="24px" $after="47px">8.281</PriceTag>
              <PriceTag $bg="#52b94e" $color="#fff" $bold $height="22px">8.231</PriceTag>
              <PriceTag $bg="#12d0ce" $height="23px" $after="1px">8.187</PriceTag>
              <PriceTag $bg="#e0204a" $color="#fff" $bold $width="83px" $height="42px">8.181<small>02:34:00</small></PriceTag>
              <PriceTag $bg="#2fd0cc" $height="23px" $after="8px">8.097</PriceTag>
              <svg width="10" height="14" viewBox="0 0 10 14"><path d="M0 0h3l6 7-6 7H0z" fill="#d0106a" /></svg>
              <PriceTag $color="#b0acac" $bold $height="16px">8.000</PriceTag>
              <AutoLog />
            </Scale>
          </ChartPane>
          <ChartPane $height="107px">
            <MomentumPlot />
            <Scale>
              <PriceTag $bg="#fff" $width="68px" $height="12px" $clip="top">52.439</PriceTag>
              <PriceTag $bg="#fff" $width="68px" $height="23px" $after="1px">45.262</PriceTag>
              <PriceTag $bg="#fafa3c" $width="68px" $height="23px">43.859</PriceTag>
              <PriceTag $bg="#fff" $width="68px" $height="7px" $clip="bottom">34.020</PriceTag>
              <AutoLog />
            </Scale>
          </ChartPane>
          <ChartPane $height="72px">
            <StochPlot />
            <Scale>
              <PriceTag $bg="#f06410" $color="#fff" $bold $height="9px" $clip="top">65.66</PriceTag>
              <PriceTag $bg="#2f5df2" $color="#fff" $bold $height="22px">56.61</PriceTag>
              <AutoLog />
            </Scale>
          </ChartPane>
          <ChartPane $height="20px">
            <Plot />
            <Scale><PriceTag $bg="#fff" $width="68px">51.828</PriceTag></Scale>
          </ChartPane>
          <Legend>
            <LegendTitle>TetherUS PERPETUAL CONTRACT <Flag /></LegendTitle>
            <LegendQuote>
              <span>8.112</span>
              <span><i>C</i>8.181</span>
              <span>−0.003 (−0.04%)</span>
              <span><i>Vol</i>2.12 M</span>
            </LegendQuote>
          </Legend>
          <BuyButton><b>8.182</b>BUY</BuyButton>
        </ChartArea>
        <SidePanels>
          <Watchlist>
            <WatchlistHead><Flag /></WatchlistHead>
            {watchlist.map((kind, i) => (
              <WatchRow key={i} $active={i === 0}>
                <Flag />
                <Coin kind={kind} />
              </WatchRow>
            ))}
          </Watchlist>
          <Details>
            <svg width="32" height="32" viewBox="0 0 32 32">
              <circle cx="16" cy="16" r="16" fill="#3e5fd8" />
              <path d="M16 7l8 4.500v9L16 25l-8-4.500v-9z" fill="#fff" />
            </svg>
            <p>Chainlink</p>
            <p>PERP</p>
            <p>BINANCE</p>
            <p>Spot</p>
          </Details>
        </SidePanels>
      </LayoutArea>
    </ChartWindow>
  );
}

function DrawingTools() {
  return (
    <DrawingBar role="toolbar" aria-label="Drawing tools">
      <svg width="16" height="20" viewBox="0 0 16 20" fill="#5c5c5c">
        {[3, 10, 17].map((y) => (
          <g key={y}>
            <circle cx="4" cy={y} r="1.700" />
            <circle cx="12" cy={y} r="1.700" />
          </g>
        ))}
      </svg>
      <ToolButton aria-label="Arrow">
        <svg width="32" height="32" viewBox="0 0 32 32" fill="none" stroke="#dcdcdc" strokeWidth="1.600">
          <circle cx="4" cy="27" r="3" />
          <circle cx="27" cy="4" r="3" />
          <path d="M6 25L25 6" />
          <path d="M24 7l-3 10-7-7z" fill="#dcdcdc" strokeWidth="0" />
        </svg>
      </ToolButton>
      <ToolButton aria-label="Trend angle">
        <svg width="32" height="32" viewBox="0 0 32 32" fill="none" stroke="#dcdcdc" strokeWidth="1.600">
          <circle cx="4" cy="27" r="3" />
          <circle cx="27" cy="4" r="3" />
          <path d="M6 25L25 6M7 27h22M13 18q5 3 4 9" />
        </svg>
      </ToolButton>
      <ToolButton aria-label="Trend line">
        <svg width="32" height="32" viewBox="0 0 32 32" fill="none" stroke="#dcdcdc" strokeWidth="1.600">
          <circle cx="4" cy="27" r="3" />
          <circle cx="27" cy="4" r="3" />
          <path d="M6 25L25 6" />
        </svg>
      </ToolButton>
      <ToolButton aria-label="Vertical line">
        <svg width="32" height="32" viewBox="0 0 32 32" fill="none" stroke="#dcdcdc" strokeWidth="1.600">
          <circle cx="17" cy="16" r="3" />
          <path d="M17 2v11M17 19v11" />
        </svg>
      </ToolButton>
    </DrawingBar>
  );
}

function AggrBrowser() {
  return (
    <AggrWindow>
      <TabStrip $pad="0 19px 0 15px">
        <IconButton aria-label="Search tabs" $color="#6c6c6c"><Stroke><path d="M5 7l5 5 5-5" /></Stroke></IconButton>
        <Spacer $width="25px" />
        <svg width="20" height="20" viewBox="0 0 20 20"><path d="M4 10h12l-6 8z" fill="#e02830" /></svg>
        <Spacer $width="10px" />
        <TabTitle $width="24px">BTC</TabTitle>
        <Spacer $width="5px" />
        <IconButton aria-label="Mute tab">
          <Stroke width={1.6}>
            <path d="M3 8h2.500L9.500 4.500v11L5.500 12H3zM12 7.500q2 2.500 0 5M12.500 3.500q7 6.500 0 13" />
          </Stroke>
        </IconButton>
        <Spacer $width="10px" />
        <IconButton aria-label="Close tab"><CloseIcon /></IconButton>
        <Spacer $width="25px" />
        <IconButton aria-label="New tab" $color="#747474"><PlusIcon /></IconButton>
        <Spacer $width="93px" />
        <Gemini><SparkIcon />Ask Gemini</Gemini>
        <Spacer />
        <WindowControls>
          <IconButton aria-label="Minimize" $color="#8a8a8a"><Stroke width={1}><path d="M3 9.500h14" /></Stroke></IconButton>
          <IconButton aria-label="Maximize" $color="#8a8a8a"><Stroke width={1}><path d="M3.500 3.500h12v12h-12z" /></Stroke></IconButton>
          <IconButton aria-label="Close" $color="#8a8a8a"><Stroke width={1}><path d="M4 4l12 12M16 4L4 16" /></Stroke></IconButton>
        </WindowControls>
      </TabStrip>
      <NavBar $pad="0 18px 0 19px">
        <IconButton aria-label="Back"><Stroke><path d="M17 10H4M10 3.500L3.500 10l6.500 6.500" /></Stroke></IconButton>
        <Spacer $width="25px" />
        <IconButton aria-label="Reload"><Stroke><path d="M16.500 11A6.700 6.700 0 1 1 14.500 5L17 7.500M17 2v6h-6" /></Stroke></IconButton>
        <Spacer $width="22px" />
        <Omnibox $width="276px" $pad="0 19px 0 6px">
          <IconButton $size="30px" $bg="#000000" aria-label="Site information">
            <Stroke width={1.8}>
              <circle cx="5" cy="5.500" r="2.200" />
              <path d="M9.500 5.500H17M3 14h7" />
              <circle cx="15" cy="14" r="2.200" />
            </Stroke>
          </IconButton>
          <Spacer $width="10px" />
          <Url href="#aggr">aggr.trade<span>/hapu</span></Url>
          <IconButton $size="30px" $bg="#000000" aria-label="Install app" $color="#c4c7c9">
            <Stroke width={1.8}><path d="M10 3H1.500v12h17v-3M14.500 2v8M11 7l3.500 3.500L18 7M6 17.500h8" /></Stroke>
          </IconButton>
          <Spacer $width="15px" />
          <IconButton aria-label="Bookmark this page" $color="#c4c7c9"><StarIcon /></IconButton>
        </Omnibox>
        <Spacer $width="24px" />
        <IconButton aria-label="Extensions"><PuzzleIcon /></IconButton>
        <Spacer $width="46px" />
        <IconButton aria-label="More extensions"><ChevronsIcon /></IconButton>
        <Spacer />
        <ActionLink>Action...</ActionLink>
        <Spacer $width="8px" />
        <IconButton aria-label="Menu">
          <svg width="20" height="20" viewBox="0 0 20 20" fill="currentColor">
            <circle cx="10" cy="4" r="2" /><circle cx="10" cy="10" r="2" /><circle cx="10" cy="16" r="2" />
          </svg>
        </IconButton>
      </NavBar>
      <BookmarkBar $pad="0 18px 6px 14px">
        <IconButton aria-label="Apps">
          <Stroke><path d="M2 2h6v6H2zM12 2h6v6h-6zM2 12h6v6H2zM12 12h6v6h-6z" /></Stroke>
        </IconButton>
        <Spacer $width="0px" />
        <Bookmark href="#gmail"><GmailIcon />Gmail</Bookmark>
        <Bookmark href="#youtube"><YouTubeIcon />YouTube</Bookmark>
        <Bookmark href="#maps"><MapsIcon />Maps</Bookmark>
        <Spacer />
        <IconButton aria-label="More bookmarks"><Stroke size={18}><path d="M4 5l5 5-5 5M11 5l5 5-5 5" /></Stroke></IconButton>
        <Spacer $width="0px" />
        <Bookmark href="#all">
          <Stroke size={22} width={1.6}><path d="M1.500 4.500c0-1 .5-1.500 1.500-1.500h4.500l2 2H17c1 0 1.500.5 1.500 1.500v9c0 1-.5 1.500-1.500 1.500H3c-1 0-1.500-.5-1.500-1.500z" /></Stroke>
          All Bookmarks
        </Bookmark>
      </BookmarkBar>

      <AggrPage>
        <Pane>
          <Stats>
            {stats.map(({ span, buy, sell, share, left, right }) => (
              <StatRow key={span} $buy={left} $sell={right} style={{ '--share': `${share}%` }}>
                {buy}
                <span>{span}</span>
                <b>{sell}</b>
              </StatRow>
            ))}
          </Stats>
          {trades.map(({ icon, price, amount, time, bg, color, arrow }, i) => (
            <TradeRow key={i} $bg={bg} $color={color}>
              {arrow ? (
                <ExpandButton aria-label="Toggle details">
                  <Stroke width={2.5}><path d={arrow === 'up' ? 'M4 13l6-6 6 6' : 'M4 7l6 6 6-6'} /></Stroke>
                </ExpandButton>
              ) : <span />}
              <TradeIcon>{icon === 'okx' ? <OkxIcon /> : <BinanceIcon color={icon === 'gold' ? '#f0ac30' : '#fff'} />}</TradeIcon>
              <span>{price}</span>
              <span><b>$</b>{amount}</span>
              <span>{time}</span>
            </TradeRow>
          ))}
        </Pane>
      </AggrPage>
    </AggrWindow>
  );
}

function Background() {
  return (
    <Wallpaper viewBox="0 0 1280 720" preserveAspectRatio="xMinYMin slice" aria-hidden="true">
      <defs>
        <linearGradient id="rock" x1="0" x2="0" y1="0" y2="1">
          <stop offset="0" stopColor="#141c10" />
          <stop offset="0.05" stopColor="#1a1e26" />
          <stop offset="0.1" stopColor="#2e3644" />
          <stop offset="0.14" stopColor="#382e2c" />
          <stop offset="0.2" stopColor="#34404e" />
          <stop offset="0.35" stopColor="#303c4a" />
          <stop offset="0.44" stopColor="#3c4a58" />
          <stop offset="0.52" stopColor="#5c6c80" />
          <stop offset="0.6" stopColor="#56606c" />
          <stop offset="0.66" stopColor="#24262a" />
          <stop offset="0.75" stopColor="#384a68" />
          <stop offset="0.83" stopColor="#14181c" />
          <stop offset="0.9" stopColor="#382c1a" />
          <stop offset="1" stopColor="#4c3820" />
        </linearGradient>
        <filter id="grain" x="0" y="0" width="100%" height="100%">
          <feTurbulence type="fractalNoise" baseFrequency="0.1 0.3" numOctaves="5" seed="4" />
          <feColorMatrix values="0 0 0 0 0  0 0 0 0 0  0 0 0 0 0  2 0 0 0 -0.800" />
        </filter>
      </defs>
      <rect width="450" height="720" fill="url(#rock)" />
      <rect x="450" width="830" height="3" fill="#6c6c6a" />
      <path d="M120 0H420V7H120z" fill="#2c3c20" />
      <path d="M0 640L50 560V600L20 720H0z" fill="#463620" />
      <path d="M22 460L50 430V480L10 530L0 560V500z" fill="#0a0b0c" />
      <path d="M25 720L50 690V720z" fill="#060606" />
      <rect width="450" height="720" filter="url(#grain)" />
    </Wallpaper>
  );
}

function App() {
  return (
    <>
      <GlobalStyle />
      <Desktop>
        <Background />
        <DesktopIcons aria-label="Desktop">
          {shortcuts.map(({ art, label }) => (
            <Shortcut key={art} href={`#${art}`}>
              <AppArt name={art} />
              <span>
                {label.map((line) => <div key={line}>{line}</div>)}
              </span>
            </Shortcut>
          ))}
        </DesktopIcons>
        <ChartBrowser />
        <DrawingTools />
        <AggrBrowser />
      </Desktop>
    </>
  );
}

export default App;
